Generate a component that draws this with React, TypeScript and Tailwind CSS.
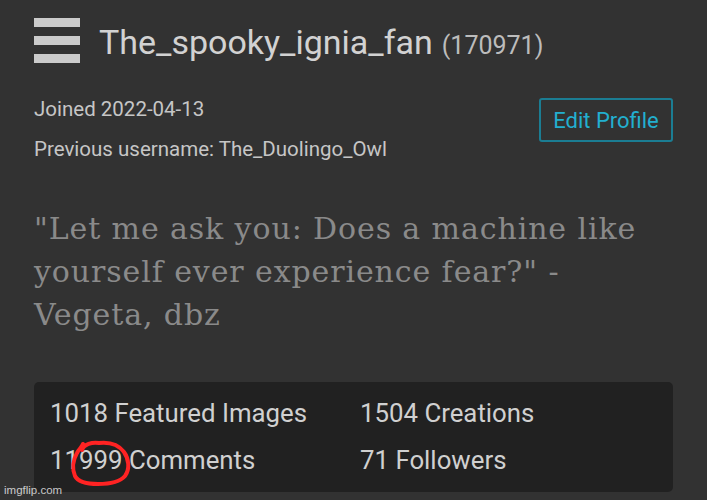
import React from "react";

export default function App() {
  return (
    <div
      className="relative w-[707px] h-[500px] overflow-hidden bg-[#323232] px-[34px]"
      style={{ fontFamily: "Roboto, 'Liberation Sans', sans-serif" }}
    >
      {/* Header */}
      <div className="flex items-start pt-[18px]">
        <div className="flex flex-col gap-[9px] w-[46px]">
          <div className="h-[9px] bg-[#cbcbcb]" />
          <div className="h-[9px] bg-[#cbcbcb]" />
          <div className="h-[9px] bg-[#cbcbcb]" />
        </div>
        <div className="ml-[19px] mt-[7px] leading-[34px] whitespace-nowrap">
          <span className="text-[34px] text-[#d2d2d2]">The_spooky_ignia_fan</span>
          <span className="ml-[9px] text-[25px] text-[#bcbcbc]">(170971)</span>
        </div>
      </div>

      {/* Info row */}
      <div className="mt-[23px] flex justify-between items-start">
        <div className="text-[20.5px] leading-[40px] text-[#c6c6c6]">
          <div>Joined 2022-04-13</div>
          <div>Previous username: The_Duolingo_Owl</div>
        </div>
        <div className="mt-[9px] flex h-[44px] w-[134px] items-center justify-center rounded-[3px] border-2 border-[#1b7d93] text-[22px] text-[#22afcf]">
          Edit Profile
        </div>
      </div>

      {/* Quote */}
      <div
        className="mt-[38px] text-[30px] leading-[43px] tracking-[0.9px] text-[#8a8a8a] whitespace-nowrap"
        style={{ fontFamily: "'DejaVu Serif', 'Liberation Serif', serif" }}
      >
        "Let me ask you: Does a machine like
        <br />
        yourself ever experience fear?" -
        <br />
        Vegeta, dbz
      </div>

      {/* Stats */}
      <div className="relative mt-[46px] h-[110px] rounded-[5px] bg-[#212121] pl-[16px] pt-[8px]">
        <div className="grid grid-cols-[310px_1fr] text-[25.8px] leading-[47px] text-[#d0d0d0]">
          <div>1018 Featured Images</div>
          <div>1504 Creations</div>
          <div>11999 Comments</div>
          <div>71 Followers</div>
        </div>
      </div>

      {/* red scribble circle */}
      <svg
        className="absolute left-[68px] top-[438px]"
        width="68"
        height="52"
        viewBox="0 0 68 52"
        fill="none"
      >
        <path
          d="M14 12 C16 6 24 4 31 5 C40 4 50 6 56 14 C61 21 62 31 57 38 C51 45 40 46 30 46 C20 46 10 44 7 38 C4 31 5 22 9 15 C11 11 14 9 15 6"
          stroke="#ff2323"
          strokeWidth="4"
          strokeLinecap="round"
          strokeLinejoin="round"
        />
      </svg>

      {/* watermark */}
      <div
        className="absolute left-[4px] bottom-[3px] text-[11.5px] leading-[14px] text-white/75"
        style={{ fontFamily: "'Liberation Sans', Arial, sans-serif" }}
      >
        imgflip.com
      </div>
    </div>
  );
}
